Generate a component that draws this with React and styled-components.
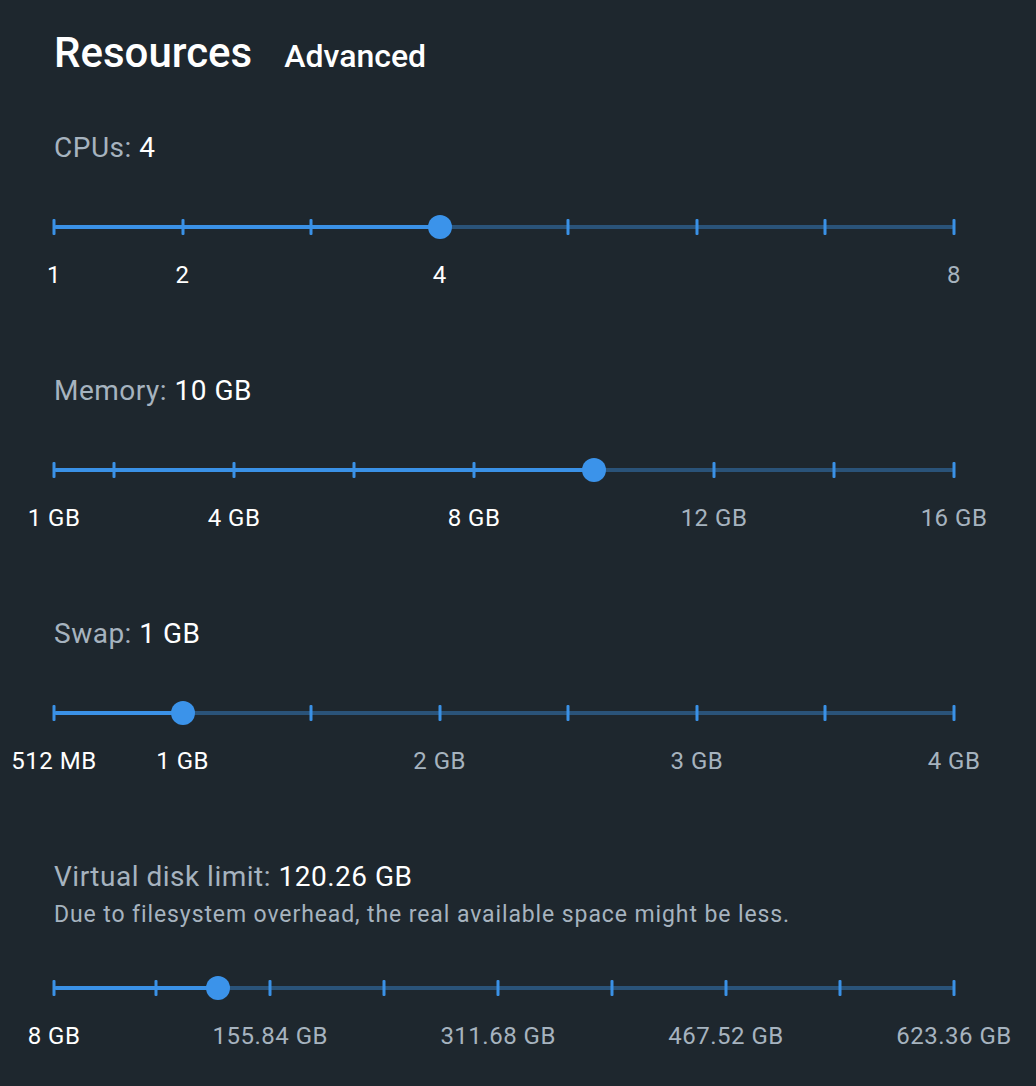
import React from "react";
import styled, { createGlobalStyle } from "styled-components";

const GlobalStyle = createGlobalStyle`
    html, body {
        margin: 0;
        padding: 0;
        background: #1e272e;
    }
    body {
        font-family: Roboto, "Liberation Sans", Arial, sans-serif;
        -webkit-font-smoothing: antialiased;
    }
`;

const Page = styled.div`
    min-height: 1086px;
    background: #1e272e;
    padding: 31px 0 0 54px;
    box-sizing: border-box;
    color: #fff;
`;

const Header = styled.div`
    display: flex;
    align-items: baseline;
    gap: 32px;
`;

const Title = styled.h1`
    margin: 0;
    font-size: 42px;
    line-height: 43px;
    font-weight: 500;
    color: #fff;
`;

const Tab = styled.span`
    font-size: 32px;
    line-height: 43px;
    font-weight: 500;
    color: #fff;
`;

const Sections = styled.div`
    display: flex;
    flex-direction: column;
    gap: 86px;
    margin-top: 54px;
`;

const Section = styled.section`
    display: flex;
    flex-direction: column;
    width: 900px;
`;

const Label = styled.div`
    font-size: 28px;
    line-height: 32px;
    letter-spacing: 0.5px;
    color: #a6b3bf;
    white-space: nowrap;
`;

const Value = styled.span`
    color: #fff;
`;

const Hint = styled.div`
    margin-top: 8px;
    font-size: 23px;
    line-height: 28px;
    letter-spacing: 0.9px;
    color: #a6b3bf;
    white-space: nowrap;
`;

const Rail = styled.div`
    position: relative;
    height: 4px;
    margin: ${(p) => (p.$hint ? "57px" : "61px")} 0 10px;
    border-radius: 2px;
`;

const Tick = styled.span`
    position: absolute;
    top: 50%;
    width: 3px;
    height: 16px;
    border-radius: 1px;
    background: #3a91e6;
    transform: translate(-50%, -50%);
`;

const Thumb = styled.span`
    position: absolute;
    top: 50%;
    width: 24px;
    height: 24px;
    border-radius: 50%;
    background: #3b93ea;
    transform: translate(-50%, -50%);
`;

const Marks = styled.div`
    position: relative;
    height: 28px;
    margin-top: 22px;
`;

const Mark = styled.span`
    position: absolute;
    top: 0;
    font-size: 24px;
    line-height: 28px;
    letter-spacing: 0.5px;
    white-space: nowrap;
    transform: translateX(-50%);
    color: ${(p) => (p.$active ? "#ffffff" : "#a6b3bf")};
`;

const ACTIVE = "#3a91e6";
const INACTIVE = "#2a5379";

function Slider({ min, max, value, ticks, marks, hint }) {
    const pct = (v) => ((v - min) / (max - min)) * 100;
    const fill = pct(value);
    return (
        <>
            <Rail
                $hint={hint}
                style={{
                    background: `linear-gradient(to right, ${ACTIVE} 0, ${ACTIVE} ${fill}%, ${INACTIVE} ${fill}%, ${INACTIVE} 100%)`,
                }}
            >
                {ticks.map((t) => (
                    <Tick key={t} style={{ left: `${pct(t)}%` }} />
                ))}
                <Thumb style={{ left: `${fill}%` }} />
            </Rail>
            <Marks>
                {marks.map((m) => (
                    <Mark key={m.label} $active={m.value <= value} style={{ left: `${pct(m.value)}%` }}>
                        {m.label}
                    </Mark>
                ))}
            </Marks>
        </>
    );
}

const range = (from, to, step) => {
    const out = [];
    for (let v = from; v <= to + 1e-6; v += step) out.push(v);
    return out;
};

const diskStep = 77.92;

export default function App() {
    return (
        <Page>
            <GlobalStyle />
            <Header>
                <Title>Resources</Title>
                <Tab>Advanced</Tab>
            </Header>
            <Sections>
                <Section>
                    <Label>CPUs: <Value>4</Value></Label>
                    <Slider
                        min={1}
                        max={8}
                        value={4}
                        ticks={range(1, 8, 1)}
                        marks={[
                            { value: 1, label: "1" },
                            { value: 2, label: "2" },
                            { value: 4, label: "4" },
                            { value: 8, label: "8" },
                        ]}
                    />
                </Section>
                <Section>
                    <Label>Memory: <Value>10 GB</Value></Label>
                    <Slider
                        min={1}
                        max={16}
                        value={10}
                        ticks={[1, ...range(2, 16, 2)]}
                        marks={[
                            { value: 1, label: "1 GB" },
                            { value: 4, label: "4 GB" },
                            { value: 8, label: "8 GB" },
                            { value: 12, label: "12 GB" },
                            { value: 16, label: "16 GB" },
                        ]}
                    />
                </Section>
                <Section>
                    <Label>Swap: <Value>1 GB</Value></Label>
                    <Slider
                        min={0.5}
                        max={4}
                        value={1}
                        ticks={range(0.5, 4, 0.5)}
                        marks={[
                            { value: 0.5, label: "512 MB" },
                            { value: 1, label: "1 GB" },
                            { value: 2, label: "2 GB" },
                            { value: 3, label: "3 GB" },
                            { value: 4, label: "4 GB" },
                        ]}
                    />
                </Section>
                <Section>
                    <Label>Virtual disk limit: <Value>120.26 GB</Value></Label>
                    <Hint>Due to filesystem overhead, the real available space might be less.</Hint>
                    <Slider
                        hint
                        min={8}
                        max={623.36}
                        value={120.26}
                        ticks={[8, ...range(diskStep, 623.36, diskStep)]}
                        marks={[
                            { value: 8, label: "8 GB" },
                            { value: 155.84, label: "155.84 GB" },
                            { value: 311.68, label: "311.68 GB" },
                            { value: 467.52, label: "467.52 GB" },
                            { value: 623.36, label: "623.36 GB" },
                        ]}
                    />
                </Section>
            </Sections>
        </Page>
    );
}
